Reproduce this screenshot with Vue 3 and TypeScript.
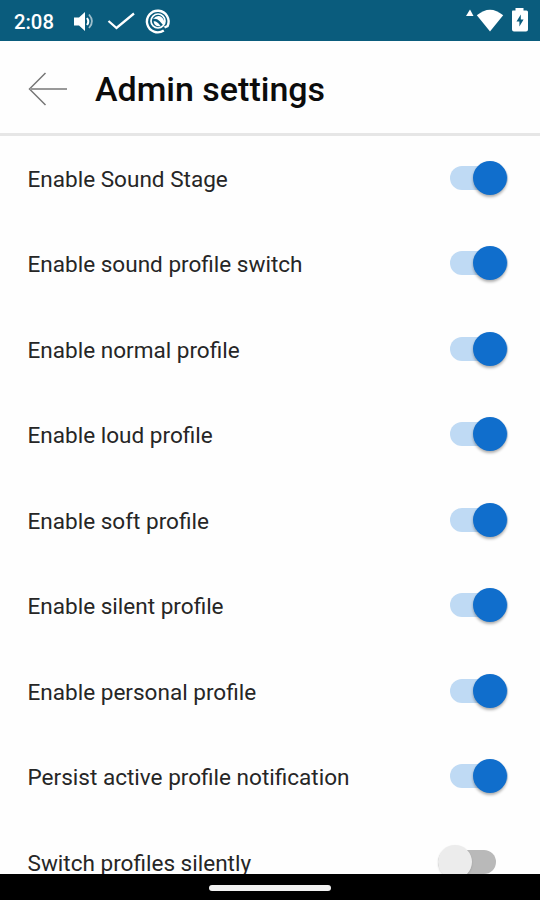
<script setup lang="ts">
import { ref } from 'vue'

interface Setting {
  label: string
  enabled: boolean
}

const settings = ref<Setting[]>([
  { label: 'Enable Sound Stage', enabled: true },
  { label: 'Enable sound profile switch', enabled: true },
  { label: 'Enable normal profile', enabled: true },
  { label: 'Enable loud profile', enabled: true },
  { label: 'Enable soft profile', enabled: true },
  { label: 'Enable silent profile', enabled: true },
  { label: 'Enable personal profile', enabled: true },
  { label: 'Persist active profile notification', enabled: true },
  { label: 'Switch profiles silently', enabled: false },
])
</script>

<template>
  <div class="screen">
    <header class="status">
      <span class="clock">2:08</span>
      <svg class="status-left" width="100" height="41" viewBox="0 0 100 41" fill="none" stroke="#fff">
        <path d="M1 17.500h5l6-5.500v19l-6-5.500H1z" fill="#fff" stroke="none" />
        <path d="M14 18q2.500 3.500 0 7" stroke-width="2" />
        <path d="M16 14.500q6 7 0 13.500" stroke-width="1.800" opacity=".6" />
        <path d="M35.500 21l8 7L61 13.500" stroke-width="2.300" />
        <path d="M90.800 30.500A10.800 10.800 0 1 1 94.600 26L91.500 27.500" stroke-width="2.400" />
        <circle cx="85" cy="21" r="7" stroke-width="1.700" />
        <path d="M80 19q4.500-5 9-1.500 3.500 3.500 1.500 8l-4-4.500q-3-3-6.500-2z" fill="#fff" stroke="none" />
        <path d="M80.500 21.500q3-1 7 4.500-5.500 1.500-7-4.500z" fill="#fff" stroke="none" />
      </svg>
      <svg class="status-right" width="64" height="41" viewBox="0 0 64 41" fill="#fff">
        <path d="M2 16l4-6.500L9.500 16z" />
        <path d="M12.800 15.300Q26 4 39.200 15.300L26 31.500z" />
        <path d="M48.500 10.500h3V8h8v2.500h3q1.500 0 1.500 1.500v17.500q0 2-2 2H50q-2 0-2-2V12q0-1.500.500-1.500z" />
        <path d="M56.800 14.500l-4.300 7h2.900v5l4.200-7h-2.800z" fill="#0a5c7d" />
      </svg>
    </header>
    <div class="toolbar">
      <svg class="back" width="40" height="36" viewBox="0 0 40 36" fill="none" stroke="#777">
        <path d="M18.500 2L2.500 18l16 16" stroke-width="1.500" />
        <path d="M3 18h37" stroke="#999" stroke-width="2" />
      </svg>
      <h1>Admin settings</h1>
    </div>
    <main class="list">
      <label v-for="item in settings" :key="item.label" class="row">
        <span class="label">{{ item.label }}</span>
        <input v-model="item.enabled" type="checkbox" class="switch" />
      </label>
    </main>
    <footer class="nav"><span class="handle"></span></footer>
  </div>
</template>

<style>
body {
  margin: 0;
  background: #fff;
}
</style>

<style scoped>
.screen {
  width: 540px;
  height: 900px;
  display: flex;
  flex-direction: column;
  overflow: hidden;
  background: #fefefe;
  font-family: Roboto, "Liberation Sans", sans-serif;
}
.status {
  flex: none;
  height: 41px;
  box-sizing: border-box;
  display: flex;
  align-items: center;
  padding: 0 12px 0 14px;
  background: #0a5c7d;
  color: #fff;
}
.clock {
  width: 59px;
  padding-top: 2px;
  font-size: 20.3px;
  line-height: 24px;
  font-weight: 500;
}
.status-right {
  margin-left: auto;
}
.toolbar {
  flex: none;
  height: 95px;
  box-sizing: border-box;
  display: flex;
  align-items: center;
  padding: 0 28px 0 27px;
  border-bottom: 3px solid #e6e6e6;
}
.back {
  margin-top: 3px;
}
h1 {
  margin: 4px 0 0 28px;
  color: #0c0c0c;
  font-size: 34px;
  line-height: 40px;
  font-weight: 500;
}
.list {
  flex: 1;
  min-height: 0;
  overflow: hidden;
}
.row {
  height: 85.5px;
  box-sizing: border-box;
  display: flex;
  align-items: center;
  justify-content: space-between;
  padding: 0 32px 0 27.5px;
}
.label {
  padding-top: 2px;
  color: #262626;
  font-size: 22.55px;
  line-height: 28px;
  white-space: nowrap;
}
.switch {
  appearance: none;
  flex: none;
  width: 58px;
  height: 24px;
  margin: 0 0 2px;
  display: flex;
  align-items: center;
  background: #bfdaf4;
  border-radius: 12px;
}
.switch::before {
  content: "";
  flex: none;
  width: 34px;
  height: 34px;
  margin-left: 23px;
  border-radius: 50%;
  background: #106ecc;
  box-shadow: 0 2px 3px rgba(0, 0, 0, 0.32);
}
.switch:not(:checked) {
  margin-right: 12px;
  background: #b9b9b9;
}
.switch:not(:checked)::before {
  margin-left: 0;
  background: #ececec;
  box-shadow: 0 1px 2px rgba(0, 0, 0, 0.15);
}
.nav {
  flex: none;
  height: 26px;
  display: flex;
  justify-content: center;
  align-items: center;
  background: #000;
}
.handle {
  width: 122px;
  height: 6px;
  margin-top: 2px;
  border-radius: 3px;
  background: #f2f2f2;
}
</style>
